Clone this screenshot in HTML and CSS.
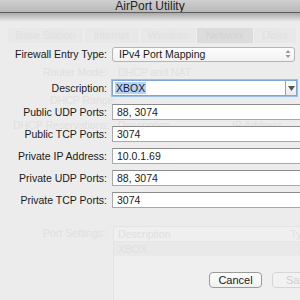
FILE: index.html
```html
<!DOCTYPE html>
<html lang="en">
<head>
    <meta charset="UTF-8">
    <title>AirPort Utility</title>
    <link rel="stylesheet" href="styles.css">
</head>
<body>
    <div id="window">
        <div class="titlebar"><span>AirPort Utility</span></div>
        <div class="shadow"></div>

        <!-- window behind the sheet, faded -->
        <div class="behind">
            <div class="tabs">
                <span class="tab">Base Station</span>
                <span class="tab">Internet</span>
                <span class="tab">Wireless</span>
                <span class="tab on">Network</span>
                <span class="tab">Disks</span>
            </div>
            <span class="ghost router-lbl">Router Mode:</span>
            <span class="ghost router-val">DHCP and NAT</span>
            <span class="ghost range-lbl">DHCP Range:</span>
            <span class="ghost resv-lbl">DHCP Reservations:</span>
            <span class="ghost resv-desc">Description</span>
            <span class="ghost resv-ip">IP Address</span>
            <span class="ghost port-lbl">Port Settings:</span>
            <div class="ghost-table">
                <div class="gt-head"><span>Description</span><span>Type</span></div>
                <div class="gt-row"><span>XBOX</span><span>IPv</span></div>
            </div>
        </div>

        <div class="sheet">
            <div class="row first">
                <label>Firewall Entry Type:</label>
                <div class="popup">
                    <span>IPv4 Port Mapping</span>
                    <svg class="updown" width="6" height="10" viewBox="0 0 6 10">
                        <path d="M0.5 4 L3 1 L5.5 4 Z M0.5 6 L3 9 L5.5 6 Z" fill="#9a9a9a"/>
                    </svg>
                </div>
            </div>
            <div class="row desc">
                <label>Description:</label>
                <div class="combo">
                    <span class="field-text"><span class="sel">XBOX</span></span>
                    <span class="combo-btn">
                        <svg width="7" height="5" viewBox="0 0 7 5"><path d="M0 0 H7 L3.5 5 Z" fill="#555"/></svg>
                    </span>
                </div>
            </div>
            <div class="row">
                <label>Public UDP Ports:</label>
                <div class="field">88, 3074</div>
            </div>
            <div class="row">
                <label>Public TCP Ports:</label>
                <div class="field">3074</div>
            </div>
            <div class="row">
                <label>Private IP Address:</label>
                <div class="field">10.0.1.69</div>
            </div>
            <div class="row">
                <label>Private UDP Ports:</label>
                <div class="field">88, 3074</div>
            </div>
            <div class="row">
                <label>Private TCP Ports:</label>
                <div class="field">3074</div>
            </div>
            <div class="buttons">
                <button class="btn">Cancel</button>
                <button class="btn off">Save</button>
            </div>
        </div>
    </div>
</body>
</html>
```

FILE: styles.css
```css
body {
    margin: 0;
    padding: 0;
    background: #ececec;
    font-family: "Liberation Sans", Arial, sans-serif;
}
#window {
    position: relative;
    width: 300px;
    height: 300px;
    overflow: hidden;
    background: #ececec;
}
.titlebar {
    height: 12px;
    display: flex;
    justify-content: center;
    align-items: flex-end;
    background: linear-gradient(#cfcfcf, #b9b9b9);
    border-bottom: 1px solid #5e5e5e;
    font-size: 12px;
    color: #222;
    line-height: 11px;
    overflow: hidden;
}
.shadow {
    height: 9px;
    background: linear-gradient(#a9a9a9, #ececec);
}

/* faded window behind */
.behind {
    position: absolute;
    left: 0;
    top: 0;
    width: 300px;
    height: 300px;
    color: #e0e0e0;
    font-size: 10.5px;
}
.tabs {
    position: absolute;
    left: 8px;
    top: 28px;
    width: 288px;
    height: 15px;
    display: grid;
    grid-template-columns: 76px 56px 57px 57px 1fr;
    background: #e8e8e8;
    border-radius: 3px;
    line-height: 15px;
    text-align: center;
}
.tab {
    border-right: 1px solid #efefef;
}
.tab:last-child {
    border-right: none;
}
.tab.on {
    background: #dcdcdc;
    color: #d2d2d2;
}
.ghost {
    position: absolute;
    line-height: 12px;
}
.router-lbl { left: 43px; top: 66px; }
.router-val { left: 118px; top: 66px; }
.range-lbl { left: 50px; top: 94px; }
.resv-lbl { left: 13px; top: 119px; }
.resv-desc { left: 118px; top: 119px; }
.resv-ip { left: 232px; top: 119px; }
.port-lbl { left: 43px; top: 227px; }
.ghost-table {
    position: absolute;
    left: 113px;
    top: 226px;
    width: 200px;
    height: 80px;
    background: #efefef;
    border: 1px solid #e4e4e4;
}
.gt-head,
.gt-row {
    display: flex;
    justify-content: space-between;
    padding: 0 0 0 4px;
    height: 14px;
    line-height: 14px;
}
.gt-head {
    border-bottom: 1px solid #e6e6e6;
    padding-right: 1px;
}
.gt-row {
    background: #e9e9e9;
}

/* sheet */
.sheet {
    position: relative;
    padding-top: 24px;
    font-size: 10.5px;
    color: #1a1a1a;
}
.row {
    display: flex;
    align-items: center;
    height: 16px;
    margin-bottom: 6px;
}
.row.first {
    margin-bottom: 18px;
}
.row label {
    width: 107px;
    flex: none;
    text-align: right;
    margin-right: 5px;
}
.popup {
    width: 183px;
    height: 15px;
    display: flex;
    align-items: center;
    justify-content: space-between;
    padding: 0 3px 0 6px;
    box-sizing: border-box;
    background: linear-gradient(#fdfdfd, #f1f1f1);
    border: 1px solid #b5b5b5;
    border-radius: 3px;
}
.combo {
    width: 185px;
    height: 16px;
    display: flex;
    box-sizing: border-box;
    border: 1px solid #7ea6d6;
    box-shadow: 0 0 0 1px #9cc0ea;
    background: #fff;
}
.field-text {
    flex: 1;
    padding-left: 2px;
    line-height: 14px;
}
.sel {
    background: #b3d3fd;
    padding: 0 1px;
}
.combo-btn {
    width: 10px;
    border-left: 1px solid #a0a0a0;
    display: flex;
    align-items: center;
    justify-content: center;
    background: linear-gradient(#ffffff, #ececec);
}
.row.desc {
    margin-bottom: 8px;
}
.field {
    flex: 1;
    height: 16px;
    margin-right: -6px;
    box-sizing: border-box;
    border: 1px solid #a9a9a9;
    border-top-color: #8c8c8c;
    background: #fff;
    padding-left: 4px;
    line-height: 14px;
}
.buttons {
    display: flex;
    margin-top: 64px;
    padding-left: 209px;
    gap: 10px;
}
.btn {
    flex: none;
    width: 53px;
    height: 16px;
    padding: 0;
    font-family: "Liberation Sans", Arial, sans-serif;
    font-size: 11px;
    color: #1a1a1a;
    background: linear-gradient(#ffffff, #f0f0f0);
    border: 1px solid #9b9b9b;
    border-radius: 4px;
}
.btn.off {
    color: #cfcfcf;
    border-color: #d6d6d6;
    background: #f2f2f2;
    text-align: left;
    padding-left: 13px;
}
```
